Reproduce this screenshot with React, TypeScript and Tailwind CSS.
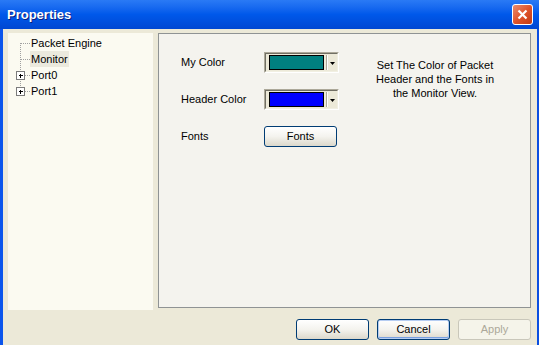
import type { ReactNode } from "react";

const font = { fontFamily: '"Liberation Sans", Arial, sans-serif' };

// one row of the tree: connector drawing + label
const TreeRow = ({
  label,
  first,
  last,
  expandable,
  selected,
}: {
  label: string;
  first?: boolean;
  last?: boolean;
  expandable?: boolean;
  selected?: boolean;
}) => (
  <div className="flex h-[16px] items-center">
    <svg width="22" height="16" className="shrink-0" shapeRendering="crispEdges">
      <line
        x1="12.5"
        x2="12.5"
        y1={first ? 8 : 0}
        y2={last ? 8 : 16}
        stroke="#a0a0a0"
        strokeDasharray="1 1"
      />
      <line x1="13" x2="22" y1="8.5" y2="8.5" stroke="#a0a0a0" strokeDasharray="1 1" />
      {expandable && (
        <g>
          <rect x="8.5" y="4.5" width="8" height="8" fill="#fff" stroke="#7b7b7b" />
          <line x1="10.5" x2="15" y1="8.5" y2="8.5" stroke="#000" />
          <line x1="12.5" x2="12.5" y1="6.5" y2="11" stroke="#000" />
        </g>
      )}
    </svg>
    <span
      className={`h-[16px] px-[1px] leading-[16px] text-[11px] text-black ${
        selected ? "bg-[#ebe9dd]" : ""
      }`}
    >
      {label}
    </span>
  </div>
);

const ColorCombo = ({ color }: { color: string }) => (
  <div className="flex h-[21px] w-[75px] border border-t-[#aca899] border-l-[#aca899] border-b-white border-r-white">
    <div className="flex flex-1 items-center border border-t-[#716f64] border-l-[#716f64] border-b-[#f1efe2] border-r-[#f1efe2] bg-[#ece9d8] pl-[3px]">
      <div className="h-[15px] w-[55px] border border-black" style={{ background: color }} />
      <div className="ml-[2px] h-[15px] w-[2px] border-l border-l-[#aca899] border-r border-r-white" />
      <svg width="7" height="15" className="ml-[1px]">
        <path d="M1 7h5l-2.5 3z" fill="#000" />
      </svg>
    </div>
  </div>
);

const XpButton = ({
  children,
  focused,
  disabled,
  className,
}: {
  children: ReactNode;
  focused?: boolean;
  disabled?: boolean;
  className?: string;
}) => (
  <button
    className={`flex h-[21px] items-center justify-center rounded-[3px] border text-[11px] ${
      disabled
        ? "border-[#c9c7ba] bg-[#f5f4ea] text-[#aca899]"
        : "border-[#003c74] bg-gradient-to-b from-white via-[#f4f3ee] to-[#dcd8cb] text-black"
    } ${focused ? "shadow-[inset_0_0_0_1px_#b6cdf2,inset_0_-1px_0_1px_#7aa0e0]" : ""} ${className || ""}`}
  >
    {children}
  </button>
);

export default function App() {
  return (
    <div className="flex h-[345px] w-[539px] flex-col overflow-hidden bg-[#ece9d8]" style={font}>
      {/* title bar */}
      <div className="flex h-[29px] shrink-0 items-center bg-gradient-to-b from-[#2a7af5] via-[#0058ea] to-[#0047d2] pl-[7px] pr-[4px]">
        <span className="text-[13px] font-bold text-white [text-shadow:1px_1px_0_#0a1e80]">
          Properties
        </span>
        <div className="ml-auto mr-[2px] flex h-[21px] w-[21px] items-center justify-center rounded-[3px] border border-white bg-gradient-to-br from-[#e88b6c] via-[#e0542b] to-[#c13a12]">
          <svg width="11" height="11" viewBox="0 0 11 11">
            <path d="M1.5 1.5l8 8M9.5 1.5l-8 8" stroke="#fff" strokeWidth="2.2" />
          </svg>
        </div>
      </div>

      {/* body */}
      <div className="flex flex-1 flex-col border-l-[3px] border-r-[2px] border-l-[#0b55ec] border-r-[#0b4fe0]">
        <div className="flex gap-[5px] pl-[5px] pt-[4px]">
          <div className="h-[277px] w-[145px] bg-[#fbfaf1] pt-[2px]">
            <TreeRow label="Packet Engine" first />
            <TreeRow label="Monitor" selected />
            <TreeRow label="Port0" expandable />
            <TreeRow label="Port1" expandable last />
          </div>

          <div className="flex h-[275px] w-[373px] items-start border border-[#8f9394] bg-[#f4f3ee] pl-[22px] pt-[18px] text-[11px] text-black">
            <div className="grid grid-cols-[83px_75px] content-start gap-y-[16px]">
              <span className="flex h-[21px] items-center">My Color</span>
              <ColorCombo color="#008080" />
              <span className="flex h-[21px] items-center">Header Color</span>
              <ColorCombo color="#0000ff" />
              <span className="flex h-[21px] items-center">Fonts</span>
              <XpButton className="w-[73px]">Fonts</XpButton>
            </div>
            <p className="ml-[31px] mt-[6px] w-[130px] text-center leading-[14px]">
              Set The Color of Packet Header and the Fonts in the Monitor View.
            </p>
          </div>
        </div>

        <div className="flex gap-[8px] pl-[293px] pt-[9px]">
          <XpButton className="w-[73px]">OK</XpButton>
          <XpButton className="w-[73px]" focused>
            Cancel
          </XpButton>
          <XpButton className="w-[73px]" disabled>
            Apply
          </XpButton>
        </div>
      </div>
    </div>
  );
}
